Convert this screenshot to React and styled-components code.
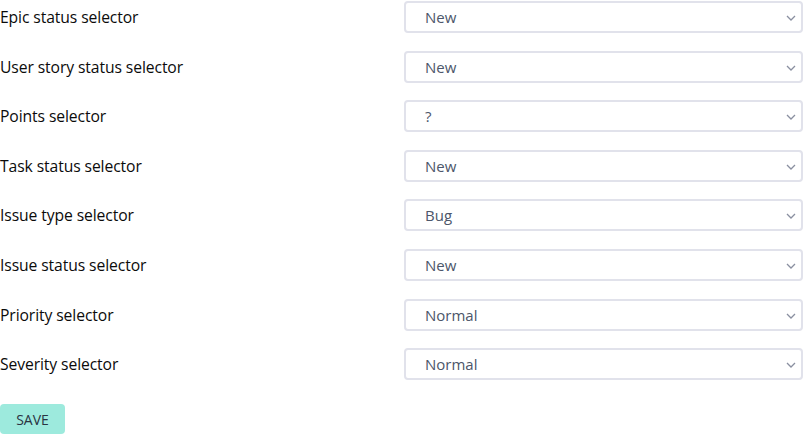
import { Fragment } from "react";
import styled, { createGlobalStyle } from "styled-components";

const GlobalStyle = createGlobalStyle`
  body {
    margin: 0;
    background: #ffffff;
    font-family: "Open Sans", "Noto Sans", sans-serif;
  }
`;

const Form = styled.form`
  width: 804px;
  padding-top: 1px;
`;

const Rows = styled.div`
  display: grid;
  grid-template-columns: 404px 1fr;
  row-gap: 17.6px;
  align-items: center;
`;

const Label = styled.label`
  font-size: 15.7px;
  color: #0b0b0b;
  letter-spacing: -0.1px;
`;

const SelectBox = styled.div`
  position: relative;
  height: 32px;
  box-sizing: border-box;
  border: 2px solid #e1e2eb;
  border-radius: 4px;
  display: flex;
  align-items: center;
  padding-left: 19px;
  font-size: 15px;
  color: #4c566a;
  margin-right: 1px;
`;

const Chevron = styled.svg`
  position: absolute;
  right: 5px;
  top: 12px;
  width: 10px;
  height: 6px;
`;

const SaveButton = styled.button`
  margin-top: 24px;
  width: 65px;
  height: 30px;
  border: none;
  border-radius: 4px;
  background: #9deadd;
  color: #2b3342;
  font-family: "Open Sans", "Noto Sans", sans-serif;
  font-size: 14px;
  padding: 0;
`;

const fields = [
  ["Epic status selector", "New"],
  ["User story status selector", "New"],
  ["Points selector", "?"],
  ["Task status selector", "New"],
  ["Issue type selector", "Bug"],
  ["Issue status selector", "New"],
  ["Priority selector", "Normal"],
  ["Severity selector", "Normal"],
];

export default function App() {
  return (
    <>
      <GlobalStyle />
      <Form>
        <Rows>
          {fields.map(([label, value]) => (
            <Fragment key={label}>
              <Label>{label}</Label>
              <SelectBox>
                {value}
                <Chevron viewBox="0 0 10 6">
                  <path d="M1 1l4 4 4-4" fill="none" stroke="#8a8fa0" strokeWidth="1.3" />
                </Chevron>
              </SelectBox>
            </Fragment>
          ))}
        </Rows>
        <SaveButton type="button">SAVE</SaveButton>
      </Form>
    </>
  );
}
